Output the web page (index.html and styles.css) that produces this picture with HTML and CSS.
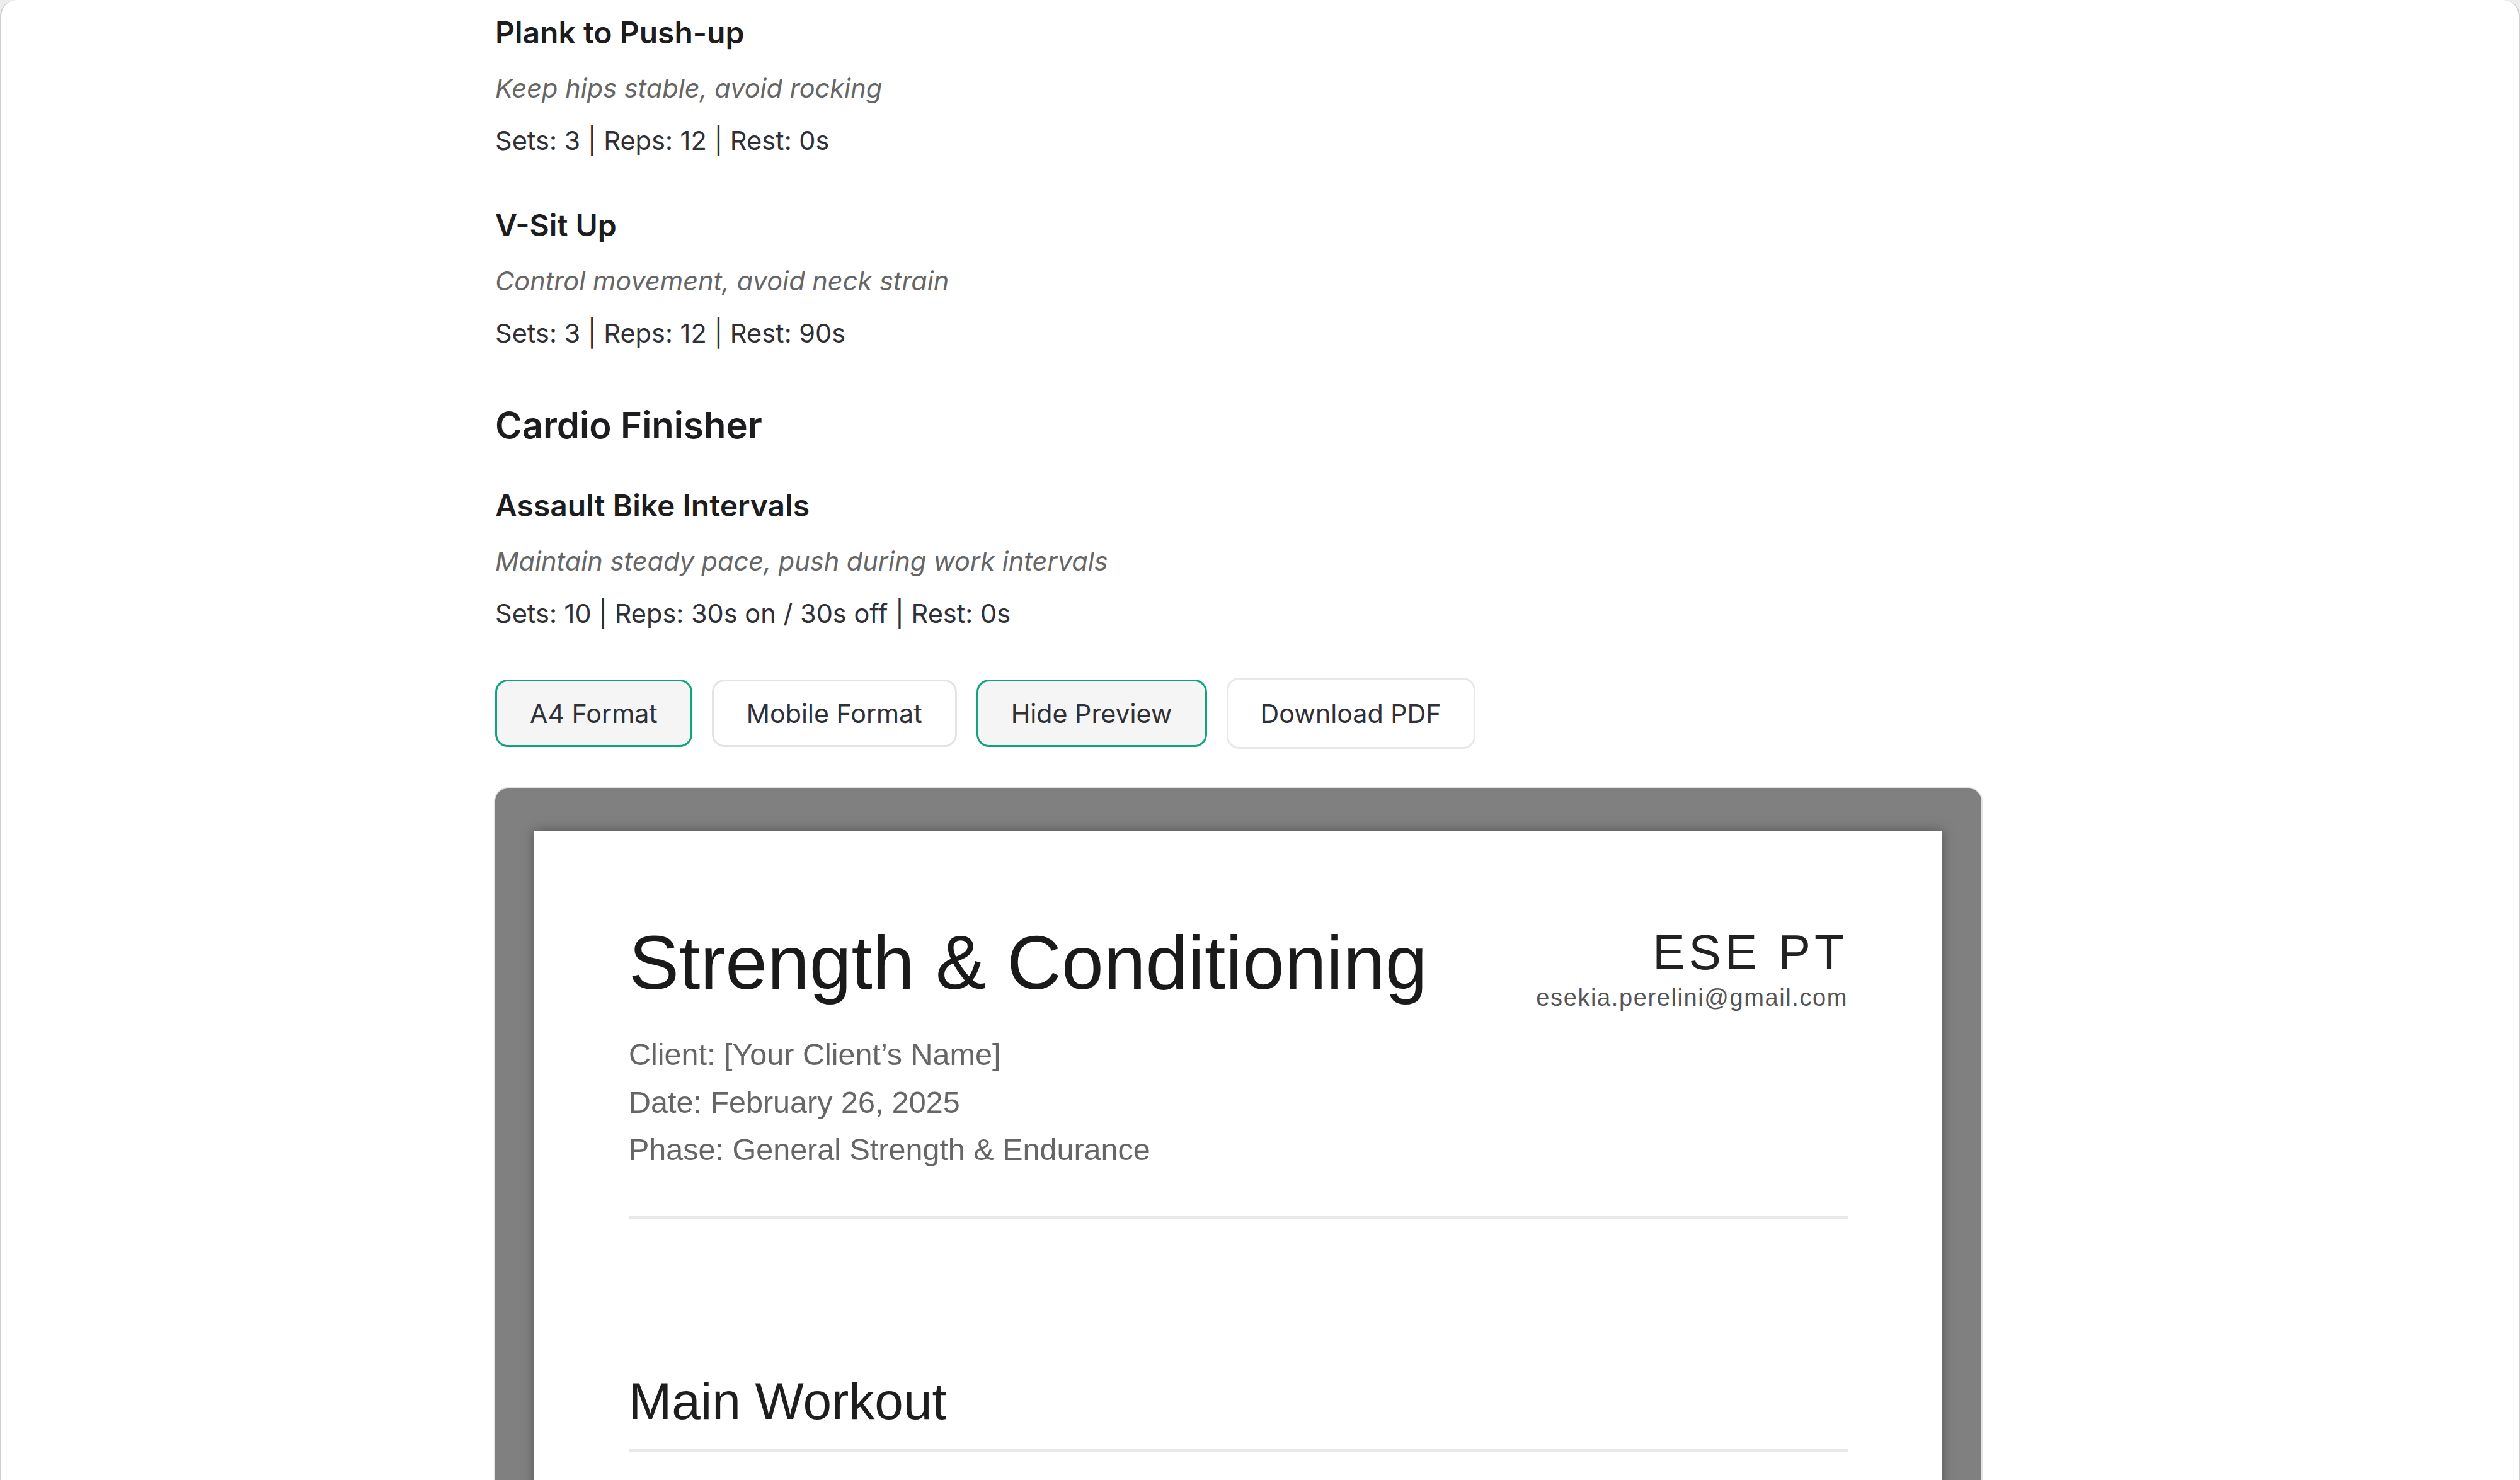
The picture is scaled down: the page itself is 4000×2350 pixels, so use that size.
FILE: index.html
```html
<!DOCTYPE html>
<html lang="en">
<head>
<meta charset="utf-8">
<title>Workout Program Preview</title>
<link rel="stylesheet" href="styles.css">
</head>
<body>
<div class="window">
  <main class="content">
    <section class="exercise">
      <h4 class="exercise-name">Plank to Push-up</h4>
      <p class="exercise-note">Keep hips stable, avoid rocking</p>
      <p class="exercise-sets">Sets: 3 | Reps: 12 | Rest: 0s</p>
    </section>
    <section class="exercise">
      <h4 class="exercise-name">V-Sit Up</h4>
      <p class="exercise-note">Control movement, avoid neck strain</p>
      <p class="exercise-sets">Sets: 3 | Reps: 12 | Rest: 90s</p>
    </section>

    <h3 class="section-title">Cardio Finisher</h3>
    <section class="exercise">
      <h4 class="exercise-name">Assault Bike Intervals</h4>
      <p class="exercise-note">Maintain steady pace, push during work intervals</p>
      <p class="exercise-sets">Sets: 10 | Reps: 30s on / 30s off | Rest: 0s</p>
    </section>

    <div class="toolbar">
      <button class="btn active">A4 Format</button>
      <button class="btn">Mobile Format</button>
      <button class="btn active">Hide Preview</button>
      <button class="btn download">Download PDF</button>
    </div>

    <div class="preview-frame">
      <article class="page">
        <header class="page-header">
          <div class="title-block">
            <h1 class="program-title">Strength &amp; Conditioning</h1>
            <div class="meta">
              <p>Client: [Your Client’s Name]</p>
              <p>Date: February 26, 2025</p>
              <p>Phase: General Strength &amp; Endurance</p>
            </div>
          </div>
          <div class="brand">
            <div class="brand-name">ESE PT</div>
            <div class="brand-email">esekia.perelini@gmail.com</div>
          </div>
        </header>
        <hr class="rule">
        <section class="page-section">
          <h2 class="page-section-title">Main Workout</h2>
          <hr class="rule rule-tight">
        </section>
      </article>
    </div>
  </main>
</div>
</body>
</html>
```

FILE: styles.css
```css
html, body {
  margin: 0;
  padding: 0;
}

body {
  background: #ececec;
  width: 4000px;
  height: 2350px;
  overflow: hidden;
  font-family: Inter, "Noto Sans", "Liberation Sans", sans-serif;
}

.window {
  box-sizing: border-box;
  width: 4000px;
  height: 2350px;
  background: #ffffff;
  border: 2px solid #cfcfcf;
  border-top: 0;
  border-bottom: 0;
  border-radius: 26px 26px 0 0;
  overflow: hidden;
}

.content {
  margin-left: 784px;
  width: 2359px;
  padding-top: 23px;
}

.exercise-name {
  margin: 0;
  font-size: 48px;
  line-height: 58px;
  font-weight: 600;
  color: #1d1d1f;
}

.exercise-note {
  margin: 31px 0 0;
  font-size: 41.5px;
  line-height: 56px;
  font-style: italic;
  color: #666666;
}

.exercise-sets {
  margin: 27px 0 0;
  font-size: 41.5px;
  line-height: 56px;
  color: #2f3137;
}

.exercise + .exercise {
  margin-top: 78px;
}

.section-title {
  margin: 82px 0 63px;
  font-size: 58px;
  line-height: 72px;
  font-weight: 600;
  color: #1d1d1f;
}

.toolbar {
  display: flex;
  align-items: center;
  gap: 31px;
  margin-top: 74px;
}

.btn {
  box-sizing: border-box;
  height: 107px;
  padding: 0 52px;
  font-family: Inter, "Noto Sans", sans-serif;
  font-size: 41.2px;
  color: #2f3137;
  background: #ffffff;
  border: 3px solid #e3e3e3;
  border-radius: 20px;
}

.btn.active {
  background: #f5f5f5;
  border-color: #10a37f;
}

.btn.download {
  height: 113px;
  padding: 0 51px;
  border-color: #e8e8e8;
}

.preview-frame {
  margin-top: 63px;
  padding: 67px 62px 0;
  background: #808080;
  border-radius: 20px 20px 0 0;
  box-shadow: 0 0 0 2px #e4e4e4;
}

.page {
  min-height: 1600px;
  padding: 140px 150px 300px;
  background: #ffffff;
  box-shadow: 0 0 18px rgba(0, 0, 0, 0.35);
  font-family: "Liberation Sans", Arial, Helvetica, sans-serif;
  color: #1e1e1e;
}

.page-header {
  display: flex;
  justify-content: space-between;
  align-items: flex-start;
}

.program-title {
  margin: 0;
  font-size: 120px;
  line-height: 138px;
  font-weight: 400;
  color: #1a1a1a;
}

.meta {
  margin-top: 40px;
}

.meta p {
  margin: 0;
  font-size: 48.5px;
  line-height: 75.5px;
  color: #666666;
}

.brand {
  margin-top: 9px;
  text-align: right;
}

.brand-name {
  font-size: 77px;
  line-height: 88px;
  letter-spacing: 6px;
  color: #222222;
}

.brand-email {
  margin-top: 6px;
  font-size: 38px;
  line-height: 44px;
  letter-spacing: 1.6px;
  color: #555555;
}

.rule {
  margin: 67px 0 0;
  height: 0;
  border: none;
  border-top: 4px solid #e8e8e8;
}

.page-section {
  margin-top: 243px;
}

.page-section-title {
  margin: 0;
  font-size: 82px;
  line-height: 94px;
  font-weight: 400;
  color: #1e1e1e;
}

.rule-tight {
  margin-top: 29px;
}
```
